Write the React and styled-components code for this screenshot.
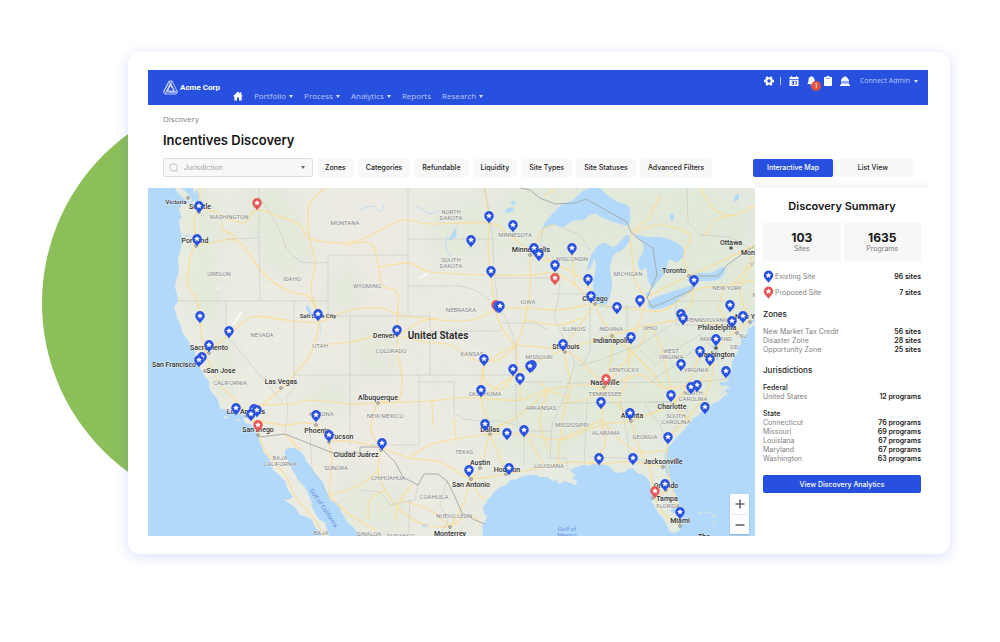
import React from "react";
import styled, { createGlobalStyle } from "styled-components";

const GlobalStyle = createGlobalStyle`
  *, *::before, *::after { box-sizing: border-box; }
  body {
    margin: 0;
    background: #fff;
    color: #222;
    font-family: Inter, "Open Sans", sans-serif;
    font-size: 7px;
  }
  h1, h2, h3, h4, p, dl, dd, ul { margin: 0; padding: 0; }
  button, select { font-family: inherit; }
`;

const blue = "#2850de";
const red = "#e25756";

/* ---------- frame ---------- */

const Page = styled.div`
  position: relative;
  min-height: 100vh;
  padding: 52px 50px 88px 128px;
  overflow: hidden;
`;

const Disc = styled.div`
  position: absolute;
  left: 42px;
  top: 94px;
  width: 418px;
  height: 418px;
  border-radius: 50%;
  background: #8cbf59;
`;

const Card = styled.main`
  position: relative;
  padding: 18px 22px 18px 20px;
  border-radius: 12px;
  background: #fff;
  box-shadow: 0 3px 14px rgba(70, 100, 225, 0.2);
`;

/* ---------- header ---------- */

const Header = styled.header`
  display: flex;
  height: 35px;
  padding: 0 10px 0 15px;
  background: ${blue};
  color: #fff;
`;

const Brand = styled.a`
  display: flex;
  align-items: center;
  gap: 2px;
  margin-right: 13px;
  color: #fff;
  font: 700 8px/12px Roboto, sans-serif;
  text-decoration: none;
`;

const Nav = styled.nav`
  display: flex;
  align-items: flex-end;
  gap: 11px;
  flex: 1;
  padding-bottom: 4px;
`;

const NavLink = styled.a`
  display: flex;
  align-items: center;
  gap: 3px;
  height: 10px;
  color: #b9c6f7;
  font: 400 8px/10px "Open Sans", sans-serif;
  text-decoration: none;
`;

const Caret = styled.span`
  width: 0;
  height: 0;
  border: solid transparent;
  border-width: 3px 2px 0;
  border-top-color: ${(p) => p.$color || "#dce3fc"};
`;

const Tools = styled.div`
  display: flex;
  align-items: center;
  align-self: flex-start;
  gap: 8px;
  height: 22px;
`;

const Divider = styled.span`
  width: 1px;
  height: 8px;
  margin-left: -2px;
  background: #b9c6f7;
`;

const IconButton = styled.button`
  position: relative;
  display: flex;
  padding: 0;
  border: 0;
  background: none;
  color: #fff;
`;

const Badge = styled.span`
  position: absolute;
  left: 4px;
  top: 5px;
  width: 10px;
  height: 10px;
  border-radius: 50%;
  background: #e2533f;
  color: #fff;
  font-size: 6px;
  line-height: 10px;
  text-align: center;
`;

const Account = styled.button`
  display: flex;
  align-items: center;
  gap: 4px;
  margin-left: 2px;
  padding: 0;
  border: 0;
  background: none;
  color: #b9c6f7;
  font: 400 7px/10px "Open Sans", sans-serif;
`;

/* ---------- title and filters ---------- */

const Intro = styled.section`
  padding: 9px 15px 0;
`;

const Crumb = styled.a`
  display: block;
  width: max-content;
  color: #808080;
  font: 400 8px/10px "Open Sans", sans-serif;
  text-decoration: none;
`;

const Title = styled.h1`
  margin-top: 7px;
  color: #161616;
  font-size: 13px;
  font-weight: 600;
  line-height: 18px;
`;

const Toolbar = styled.div`
  display: flex;
  align-items: center;
  gap: 4px;
  height: 19px;
  margin-top: 9px;
`;

const Search = styled.label`
  display: flex;
  align-items: center;
  gap: 5px;
  width: 150px;
  height: 19px;
  padding: 0 7px 0 5px;
  border: 1px solid #dedede;
  border-radius: 2px;
  background: #f8f8f8;
`;

const SearchSelect = styled.select`
  flex: 1;
  min-width: 0;
  padding: 0;
  border: 0;
  background: none;
  color: #a2a2a2;
  font-size: 7px;
  appearance: none;
`;

const Filter = styled.button`
  height: 18px;
  padding: 0 8px;
  border: 0;
  border-radius: 2px;
  background: #f8f8f8;
  color: #222;
  font-size: 7px;
  font-weight: 500;
  white-space: nowrap;
`;

const Tabs = styled.div`
  display: flex;
  margin-left: auto;
`;

const Tab = styled.button`
  width: 80px;
  height: 18px;
  padding: 0;
  border: 0;
  border-radius: 2px;
  background: ${(p) => (p.$active ? blue : "#f8f8f8")};
  color: ${(p) => (p.$active ? "#fff" : "#222")};
  font-size: 7px;
  font-weight: 500;
`;

/* ---------- map ---------- */

const Content = styled.div`
  display: grid;
  grid-template-columns: minmax(0, 1fr) 173px;
  margin-top: 11px;
`;

const MapPane = styled.section`
  position: relative;
  min-height: 348px;
  overflow: hidden;
  background: #b2d9fa;
`;

const MapDrawing = styled.svg`
  display: block;
  width: 100%;
  height: 100%;
  font-family: Roboto, sans-serif;
  text-anchor: middle;
`;

const LandLabels = styled.g`
  paint-order: stroke;
  stroke: rgba(255, 255, 255, 0.6);
  stroke-width: 1px;
  stroke-linejoin: round;
`;

const ZoomControl = styled.div`
  position: absolute;
  right: 6px;
  bottom: 2px;
  display: flex;
  flex-direction: column;
  width: 19px;
  padding: 0 2px;
  border-radius: 1px;
  background: #fff;
  box-shadow: 0 1px 2px rgba(0, 0, 0, 0.2);
`;

const ZoomButton = styled.button`
  display: flex;
  align-items: center;
  justify-content: center;
  height: 20px;
  padding: 0;
  border: 0;
  background: none;
  color: #666;

  & + & { border-top: 1px solid #e8e8e8; }
`;

/* ---------- summary ---------- */

const Summary = styled.aside`
  position: relative;
  padding: 9px 7px 0 8px;
  background: #fff;

  &::before {
    content: "";
    position: absolute;
    inset: -9px 0 auto 0;
    height: 9px;
    background: linear-gradient(rgba(0, 0, 0, 0), rgba(0, 0, 0, 0.04));
  }
`;

const SummaryTitle = styled.h2`
  color: #161616;
  font-size: 11px;
  font-weight: 600;
  line-height: 18px;
  text-align: center;
`;

const Stats = styled.div`
  display: grid;
  grid-template-columns: 1fr 1fr;
  gap: 3px;
  margin-top: 8px;
`;

const Stat = styled.div`
  display: flex;
  flex-direction: column;
  align-items: center;
  height: 38px;
  padding-top: 8px;
  background: #f7f7f7;
  color: #777;
  font-size: 7px;
  line-height: 9px;
`;

const StatValue = styled.strong`
  color: #161616;
  font-size: 12px;
  font-weight: 700;
  line-height: 13px;
`;

const Legend = styled.dl`
  margin-top: 7px;
`;

const Rows = styled.dl`
  margin-top: ${(p) => (p.$spaced ? "8px" : "0")};
`;

const Row = styled.div`
  display: flex;
  align-items: center;
  justify-content: space-between;
  height: ${(p) => (p.$tall ? 16 : 9)}px;
  color: #808080;
  line-height: 9px;

  dt { display: flex; align-items: center; gap: 1px; }
  dd { color: #222; font-weight: 600; }
`;

const Heading = styled.h3`
  margin-top: ${(p) => p.$gap}px;
  color: #222;
  font-size: 8px;
  font-weight: 500;
  line-height: 10px;
`;

const SubHeading = styled.h4`
  margin-top: 8px;
  color: #222;
  font-size: 7px;
  font-weight: 500;
  line-height: 9px;
`;

const Primary = styled.button`
  width: 100%;
  height: 18px;
  margin-top: 12px;
  padding: 0;
  border: 0;
  border-radius: 2px;
  background: ${blue};
  color: #fff;
  font-size: 7px;
  font-weight: 500;
`;

/* ---------- map geometry ---------- */

const parse = (s) => s.trim().split(/\s+/).map((p) => p.split(",").map(Number));

/* Runs a smooth curve through every point of the list. */
function curve(s, closed) {
  const p = parse(s);
  const n = p.length;
  const at = (i) => (closed ? p[(i + n) % n] : p[Math.max(0, Math.min(n - 1, i))]);
  let d = `M${p[0][0]} ${p[0][1]}`;
  for (let i = 0; i < (closed ? n : n - 1); i++) {
    const [a, b, c, e] = [at(i - 1), at(i), at(i + 1), at(i + 2)];
    d += `C${b[0] + (c[0] - a[0]) / 6} ${b[1] + (c[1] - a[1]) / 6} ${c[0] - (e[0] - b[0]) / 6} ${c[1] - (e[1] - b[1]) / 6} ${c[0]} ${c[1]}`;
  }
  return closed ? d + "Z" : d;
}

const LAND =
  "M193 188 L196 199 191 203 182 204 179 209 182 218 179 220 181 235 183 239 180 252 178 258 179 272 176 280 175 288 177 293 178 301 174 308 176 313 177 318 181 326 182 332 188 340 190 345 195 349 195 355 199 359 196 363 200 368 203 373 205 377 209 381 210 390 215 396 218 400 220 408 226 410 232 412 237 411 243 415 245 423 250 424 253 427 256 431 258 437 262 447 264 453 268 457 271 463 273 470 278 474 282 478 286 482 287 488 293 497 288 500 283 499 289 503 295 507 300 515 307 517 312 520 315 527 318 530 322 536 L329 536 327 530 325 523 320 520 317 517 312 507 311 500 308 494 305 487 298 480 295 474 292 470 289 463 285 456 285 450 289 448 295 448 301 452 305 457 306 461 308 463 313 470 315 473 323 482 325 487 328 495 330 500 338 503 340 509 342 513 348 523 353 527 360 536 L483 536 482 527 487 517 484 513 483 507 486 503 487 500 491 497 493 493 500 487 506 485 510 480 518 479 520 477 530 475 536 475 540 477 547 477 553 481 557 480 559 484 565 481 570 483 576 485 577 481 572 478 576 475 573 473 570 470 577 467 583 465 590 466 594 463 600 464 606 465 610 467 614 472 617 473 625 472 628 469 633 468 637 473 643 475 648 479 650 483 651 490 653 494 652 497 652 502 655 507 658 513 662 517 665 522 667 525 669 531 673 533 679 531 681 525 682 520 680 510 679 503 677 497 672 489 670 480 666 473 665 467 664 460 665 453 668 447 672 443 677 437 682 432 690 423 693 418 697 417 702 411 710 410 712 404 719 401 723 397 728 394 725 390 730 388 723 383 729 380 727 375 732 370 732 362 735 356 738 352 737 347 741 344 741 338 747 334 748 327 750 322 755 318 V188 Z";

const ISLANDS = [
  "175,188 184,190 192,200 187,201 180,195",
  "223,416 228,417 226,419",
  "237,419 241,421 238,421",
  "748,327 755,321 755,324 750,328",
];

const LAKES = [
  "543,229 547,220 556,210 563,204 573,200 583,191 597,187 606,194 617,202 627,205 630,213 628,225 617,223 603,218 596,214 590,215 583,220 573,221 563,227 554,225",
  "597,247 605,243 613,247 620,242 627,235 630,240 622,250 614,255 610,268 612,285 608,302 602,307 595,302 593,285 596,265 593,255",
  "587,270 590,258 593,252 594,259 590,268",
  "635,235 647,237 660,237 673,241 682,247 684,255 677,262 669,260 665,273 657,282 653,288 648,280 646,268 641,270 638,262 643,252 642,242",
  "648,303 650,309 663,308 680,300 693,290 692,286 677,290 665,294 656,297",
  "688,281 693,273 710,273 723,267 725,272 717,280 700,281",
  "646,293 649,292 650,295 647,296",
  "306,307 308,306 311,311 313,317 309,314",
  "196,190 199,195 199,206 198,214 195,202",
  "672,508 676,509 675,513 671,512",
  "715,342 718,350 718,360 715,357 713,348",
  "720,382 728,384 722,386",
  "453,232 456,228 456,236 449,240",
  "505,211 511,207 514,210 508,213",
  "511,202 515,201 514,206",
  "670,215 673,214 674,219 671,220",
  "735,196 739,194 738,200 734,201",
  "423,524 428,524 427,527 423,527",
];

const FORESTS = [
  [205, 225, 18, 36], [205, 290, 14, 40], [270, 215, 30, 30], [285, 250, 28, 26],
  [345, 290, 20, 24], [375, 350, 22, 32], [225, 365, 10, 34], [330, 395, 26, 16],
  [560, 220, 60, 50], [660, 225, 90, 40], [650, 380, 80, 50], [720, 290, 60, 40],
  [360, 500, 22, 30], [540, 420, 60, 40], [390, 510, 18, 26], [470, 230, 40, 30],
];

const STATE_LINES = [
  "259,188 259,238 260,301", "227,239 259,238", "177,301 328,301", "226,301 226,335 283,403",
  "259,196 268,210 274,220 282,235 286,248 300,262 315,263 328,262", "328,255 328,316 350,316 350,445",
  "328,255 408,255", "294,301 294,388 286,398 288,410 285,434", "350,316 430,316", "408,188 408,316",
  "408,239 492,239", "408,286 460,286 475,290 490,300", "430,316 430,375", "430,331 500,331",
  "294,375 516,375", "419,375 419,445 370,445", "419,382 454,382 454,413",
  "454,413 464,419 480,421 500,421 516,425 524,431", "495,278 552,278", "502,323 535,323 548,330",
  "516,345 516,420 524,431 524,465", "516,382 562,382", "524,431 552,431", "550,458 566,458 568,470",
  "566,383 700,382 735,378", "562,403 668,402", "587,403 584,466", "621,403 627,435 629,458", "590,457 625,458 652,462",
  "590,307 590,350 583,365", "627,306 627,340", "605,307 640,307", "676,300 676,325", "676,301 733,301", "676,325 735,325",
  "553,294 588,294", "484,188 489,210 493,240 494,278 499,305 508,322 516,345",
  "543,229 540,245 553,258 560,280 558,300 554,318 565,340 575,362 570,380 562,402 552,425 550,458",
  "578,366 600,360 620,352 640,345 655,335 672,325", "640,350 655,365 675,350 700,335 716,350",
  "650,382 675,365 700,345", "650,402 668,402 690,412", "645,405 660,425 668,445",
  "563,228 580,235 590,250", "687,188 688,222 700,235 730,237 748,247",
  "310,434 312,470 330,500", "360,490 380,492 390,505 415,500 418,485", "410,500 408,536",
  "447,481 440,505 448,520 440,536",
];

const BORDER_LINES = [
  "259,437 285,434 333,453 360,453 360,447 380,447",
  "380,447 395,462 403,477 418,485 424,474 438,474 447,481 455,497 462,513 475,520 485,524",
  "520,188 530,190 540,198 555,204 575,203 586,199 627,222 631,232 640,240 653,248 657,275 647,298 652,307 663,303 692,290 694,276 718,276 727,265 748,250 755,246",
];

const ROADS = [
  "200,188 199,206 194,220 195,240 190,260 188,285 197,300 200,320 203,345 212,370 225,390 240,405 252,418 258,436",
  "199,208 215,212 232,220 245,222 257,210 280,217 300,225 309,238 340,243 365,238 402,220 430,224 489,223 510,236 530,250 545,256 555,265",
  "195,246 215,242 235,240 250,255 265,275 290,292 308,296 318,315",
  "221,222 223,230 234,235 235,240",
  "325,188 309,205 309,235 315,262 311,290 319,320 312,350 300,368 283,387 262,405 252,412",
  "203,355 229,335 252,317 285,320 318,322 350,310 380,308 400,315 430,319 462,321 478,318 499,309 530,308 560,310 595,303",
  "345,245 370,243 378,262 382,285 397,292 398,315 397,335 400,365 402,385 397,402 378,403 371,430 381,448",
  "380,267 410,263 430,272 491,275 530,275 555,273 575,285 590,300",
  "485,188 489,223 488,250 491,275 494,300 500,325 515,346",
  "530,255 530,290 525,320 515,346 498,360 484,365 481,398 489,430 480,468 471,480 463,505 450,527",
  "530,255 538,238 545,228 555,225",
  "320,345 350,342 378,336 397,336 425,342 450,345 483,362 515,346 563,348 612,335 650,325 690,320 737,328",
  "397,336 420,322 437,318",
  "260,405 290,404 310,400 350,404 378,403 430,401 455,398 481,398 520,400 548,390 585,385 604,387 640,375 665,388 710,380",
  "252,420 285,425 300,423 316,425 329,440 350,441 381,448 410,458 440,462 471,478 506,474 540,468 570,462 600,464 630,462 663,467",
  "410,457 430,445 450,440 490,434 524,434 560,440 587,430 610,423 631,421 665,408",
  "490,434 500,458 506,474", "490,430 520,415 548,390", "524,431 535,450 545,466",
  "481,398 515,375 540,360 563,350", "563,350 570,385 562,420 558,465",
  "595,304 580,325 563,350", "595,304 602,320 612,335 610,365 604,387 602,420 605,445 590,463",
  "631,421 640,450 650,470 655,498 665,515 680,525",
  "680,526 675,500 668,470 668,440 690,415 705,395 712,375 716,350 737,330 750,320",
  "631,421 665,408 690,390 705,375 716,350",
  "631,421 620,403 628,375 630,345 640,320 645,300 635,280 632,255 630,235",
  "595,304 620,308 645,310 665,310 694,290 730,285 755,280",
  "648,297 670,285 689,276 720,262 755,245", "689,276 684,255 690,235 660,225 635,232",
  "530,255 550,262 572,272 588,285 595,304", "572,250 575,285", "612,335 640,360 665,388",
  "650,325 660,345 668,375 676,405 690,420", "604,387 585,400 562,403", "631,421 604,387",
  "737,330 720,310 725,285", "676,320 690,305 694,290", "700,350 692,375 676,402",
  "650,325 640,345 625,362 604,387", "755,260 740,290 750,320", "733,285 750,262 752,248",
  "604,387 580,360 563,350", "540,382 548,390 570,398", "548,390 540,420 548,450",
  "602,420 575,432 560,440", "602,420 620,440 640,452 668,450", "525,320 560,325 580,318",
  "432,402 433,425", "484,365 485,380 500,390 515,375", "454,418 456,440", "515,346 520,378 520,400",
  "260,437 268,455 285,475 296,497 315,520 324,536", "285,434 300,450", "329,441 332,465 330,495 350,515",
  "381,448 378,470 385,490 400,510 425,525 450,527", "450,527 430,510 400,500", "385,490 370,500 368,520",
  "350,515 375,530", "412,485 400,500 395,520", "450,527 470,515 480,524", "330,495 360,485 378,470",
  "471,480 478,493 485,500", "655,498 668,490 672,485",
  "555,188 545,196", "660,195 650,215 632,232", "700,188 715,210 735,215 755,205", "705,235 715,220 735,215",
];

const STATES = [
  ["WASHINGTON", 229, 219], ["MONTANA", 345, 225], ["NORTH", 451, 214], ["DAKOTA", 451, 220],
  ["SOUTH", 451, 262], ["DAKOTA", 451, 268], ["MINNESOTA", 515, 237], ["WISCONSIN", 572, 261],
  ["MICHIGAN", 628, 276], ["OREGON", 219, 276], ["IDAHO", 292, 281], ["WYOMING", 367, 288],
  ["NEBRASKA", 461, 312], ["IOWA", 528, 304], ["ILLINOIS", 574, 331], ["INDIANA", 611, 331],
  ["OHIO", 650, 330], ["PENNSYLVANIA", 708, 322], ["NEVADA", 262, 337], ["UTAH", 320, 348],
  ["COLORADO", 391, 353], ["KANSAS", 472, 356], ["MISSOURI", 539, 359], ["WEST", 671, 353],
  ["VIRGINIA", 671, 359], ["KENTUCKY", 624, 372], ["VIRGINIA", 696, 372], ["MARYLAND", 716, 341],
  ["DE", 734, 349], ["NJ", 743, 338], ["NEW YORK", 727, 290], ["CALIFORNIA", 230, 385],
  ["ARIZONA", 321, 416], ["NEW MEXICO", 385, 418], ["OKLAHOMA", 485, 396], ["ARKANSAS", 541, 410],
  ["TENNESSEE", 605, 396], ["NORTH", 693, 395], ["CAROLINA", 693, 401], ["SOUTH", 676, 418],
  ["CAROLINA", 676, 424], ["MISSISSIPPI", 572, 427], ["ALABAMA", 606, 435], ["GEORGIA", 645, 439],
  ["TEXAS", 464, 454], ["LOUISIANA", 549, 468], ["BAJA", 280, 460], ["CALIFORNIA", 280, 466],
  ["SONORA", 336, 470], ["CHIHUAHUA", 388, 480], ["COAHUILA", 434, 499], ["NUEVO LEON", 454, 518],
  ["SINALOA", 369, 536], ["DURANGO", 401, 538], ["BAJA", 321, 535], ["FLORIDA", 668, 508],
  ["V", 752, 266], ["M", 755, 297],
];

const CITIES = [
  ["Victoria", 176, 204, 6], ["Seattle", 200, 209], ["Portland", 195, 243], ["Sacramento", 209, 350],
  ["San Francisco", 174, 367], ["San Jose", 221, 373], ["Las Vegas", 281, 384], ["Los Angeles", 246, 414],
  ["San Diego", 258, 432], ["Phoenix", 317, 433], ["Tucson", 342, 439], ["Ciudad Juárez", 356, 457],
  ["Albuquerque", 378, 400], ["Denver", 384, 338], ["United States", 438, 339, 10], ["Salt Lake City", 318, 318, 6],
  ["Minneapolis", 531, 252], ["Chicago", 595, 301], ["St. Louis", 566, 349], ["Indianapolis", 612, 343],
  ["Toronto", 674, 273], ["Ottawa", 731, 245], ["Montreal", 755, 255], ["New York", 750, 319],
  ["Philadelphia", 717, 330], ["Washington", 716, 357], ["Nashville", 605, 385], ["Atlanta", 632, 418],
  ["Charlotte", 672, 409], ["Dallas", 490, 432], ["Austin", 480, 465], ["Houston", 507, 472],
  ["San Antonio", 471, 487], ["Monterrey", 450, 536], ["Jacksonville", 663, 464], ["Orlando", 666, 488],
  ["Tampa", 667, 501], ["Miami", 680, 523], ["The", 704, 539],
];

const DOTS = parse(
  "188,198 199,212 196,246 209,353 205,371 281,388 258,435 316,425 329,442 381,450 378,403 530,255 595,304 565,352 612,336 689,276 750,322 737,333 604,387 631,421 490,434 480,468 506,474 471,479 450,527 663,467 666,490 653,498 680,526 246,416"
);

const CAPITALS = parse("731,248 716,348");

const PROPOSED = parse("257,203 555,278 496,305 606,379 258,425 655,491");

const EXISTING = parse(
  "199,206 197,239 489,216 471,240 513,225 534,248 539,254 572,248 555,265 491,271 588,279 591,296 617,307 640,300 694,280 730,305 743,316 732,321 681,314 683,318 716,339 700,351 710,359 681,364 726,371 631,337 563,344 498,306 500,306 397,330 318,314 200,316 229,331 209,345 202,357 199,360 236,408 254,409 257,410 251,414 316,415 329,435 382,443 484,359 513,369 532,365 530,366 520,378 481,390 485,424 507,433 524,430 601,402 671,395 697,385 691,387 705,407 630,413 668,437 599,458 633,458 469,470 509,468 665,484 680,512"
);

/* A pin whose head is centred on 0,0. */
const PinShape = ({ color }) => (
  <>
    <path d="M0 7.4C-1.5 5-4.800 3-4.800-.2A4.800 4.800 0 0 1 4.800-.2C4.800 3 1.500 5 0 7.400Z" fill={color} stroke="#fff" strokeOpacity=".25" strokeWidth=".4" />
    <path d="M0-3.100.9-1.200 2.900-1 1.400.4 1.900 2.400 0 1.300-1.900 2.400-1.400.4-2.900-1-.9-1.200Z" fill="#fff" />
  </>
);

const LegendPin = ({ color }) => (
  <svg width="11" height="13" viewBox="-5.5 -5.5 11 13" aria-hidden="true">
    <PinShape color={color} />
  </svg>
);

function UsMap() {
  return (
    <MapDrawing viewBox="148 188 607 348" preserveAspectRatio="xMidYMid slice" role="img" aria-label="Sites in the United States">
      <defs>
        <linearGradient id="land" x1="0" x2="1" y1="0" y2="0">
          <stop offset="0" stopColor="#eaece1" />
          <stop offset="0.35" stopColor="#edebe3" />
          <stop offset="0.65" stopColor="#e7ebe0" />
          <stop offset="1" stopColor="#e4eade" />
        </linearGradient>
        <filter id="soft" x="-50%" y="-50%" width="200%" height="200%">
          <feGaussianBlur stdDeviation="7" />
        </filter>
        <filter id="relief" x="0" y="0" width="100%" height="100%">
          <feTurbulence type="fractalNoise" baseFrequency="0.07" numOctaves="4" seed="4" />
          <feColorMatrix values="0 0 0 0 0.72  0 0 0 0 0.79  0 0 0 0 0.70  1.8 0 0 0 -0.85" />
        </filter>
        <clipPath id="coast"><path d={LAND} /></clipPath>
      </defs>

      <path d={LAND} fill="url(#land)" />
      <g clipPath="url(#coast)">
        <g filter="url(#soft)" fill="#dde8d6" opacity=".5">
          {FORESTS.map(([x, y, rx, ry], i) => <ellipse key={i} cx={x} cy={y} rx={rx} ry={ry} />)}
        </g>
        <rect x="148" y="188" width="607" height="348" filter="url(#relief)" opacity=".22" />
      </g>
      <g fill="#e6eadf">{ISLANDS.map((s) => <path key={s} d={curve(s, true)} />)}</g>
      <g fill="#b2d9fa">{LAKES.map((s) => <path key={s} d={curve(s, true)} />)}</g>
      <g fill="#fafaf8">
        <path d="M232 325 241 311 243 312 239 318 234 325ZM419 278 427 272 428 274 421 279ZM215 291 219 286 220 288Z" />
      </g>
      <g fill="none" stroke="#b2d9fa" strokeWidth=".8">
        <path d={curve("360,210 372,206 380,212 384,204")} />
        <path d={curve("415,206 423,210 430,214 438,210")} />
        <path d={curve("447,236 446,248 450,254 449,262")} />
        <path d={curve("319,316 320,326 321,334")} />
        <path d={curve("181,234 190,236 195,240")} />
        <path d="M720 395 728 388" />
      </g>

      <g fill="none" stroke="#fade9c" strokeWidth="1.2" strokeLinejoin="round" strokeLinecap="round">
        {ROADS.map((s) => <path key={s} d={curve(s)} />)}
      </g>
      <g fill="none" stroke="#bcbdb9" strokeWidth=".7" strokeDasharray="1.6 1">
        {STATE_LINES.map((s) => <polyline key={s} points={s} />)}
      </g>
      <g fill="none" stroke="#a4a6a4" strokeWidth=".9" strokeLinejoin="round">
        {BORDER_LINES.map((s) => <polyline key={s} points={s} />)}
      </g>
      <path d={curve("697,514 707,512 715,517 713,524")} fill="none" stroke="#dfe6d8" strokeWidth="1.2" strokeDasharray="5 3" />

      <g fontSize="6" fill="#5f8fd6">
        <text transform="translate(322 509) rotate(56)">Gulf of California</text>
        <text x="567" y="531">Gulf of</text>
        <text x="567" y="537">Mexico</text>
      </g>
      <LandLabels fontSize="6" fill="#7f8181">
        {STATES.map(([name, x, y]) => <text key={name + x + y} x={x} y={y}>{name}</text>)}
      </LandLabels>
      <g fill="#fff" stroke="#555" strokeWidth=".7">
        {DOTS.map(([x, y]) => <circle key={x + "-" + y} cx={x} cy={y} r="1.3" />)}
      </g>
      <g fill="#555">
        {CAPITALS.map(([x, y]) => <circle key={x + "-" + y} cx={x} cy={y} r="1.8" />)}
      </g>
      <LandLabels fill="#2d2d2d">
        {CITIES.map(([name, x, y, size = 7]) => (
          <text key={name} x={x} y={y} fontSize={size} fontWeight={size === 10 ? 700 : 500}>{name}</text>
        ))}
      </LandLabels>

      {PROPOSED.map(([x, y]) => (
        <g key={x + "-" + y} transform={`translate(${x} ${y})`}><PinShape color={red} /></g>
      ))}
      {EXISTING.map(([x, y]) => (
        <g key={x + "-" + y} transform={`translate(${x} ${y})`}><PinShape color={blue} /></g>
      ))}
    </MapDrawing>
  );
}

/* ---------- icons ---------- */

const Logo = () => (
  <svg width="15" height="15" viewBox="0 0 30 30" fill="none" stroke="#dfe5fc" strokeWidth="1.6" strokeLinejoin="round" aria-hidden="true">
    <path d="M12 2h6l11 22-3 4H4l-3-4Z" />
    <path d="M12 2 22 22H9l6-12 3 6M18 2 7 24h19M4 28l11-22 8 16M1 24 11 6M29 24H13" />
  </svg>
);

const HomeIcon = () => (
  <svg width="10" height="10" viewBox="0 0 18 18" fill="#fff" aria-hidden="true">
    <path d="M9 1 0 9.4h2.4V17h4.8v-5.5h3.6V17h4.8V9.4H18L15 6.600V2.400h-2.300v2Z" />
  </svg>
);

const GearIcon = () => (
  <svg width="10" height="10" viewBox="0 0 20 20" fill="none" stroke="#fff" aria-hidden="true">
    <circle cx="10" cy="10" r="5.500" strokeWidth="4" />
    <path d="M3.500 10H0M16.500 10H20M6.700 4.400 5 1.400M13.300 4.400 15 1.400M6.700 15.600 5 18.600M13.300 15.600l1.700 3" strokeWidth="4.600" />
  </svg>
);

const CalendarIcon = () => (
  <svg width="10" height="10" viewBox="0 0 20 20" fill="#fff" aria-hidden="true">
    <path d="M1 2h3V0h2v2h8V0h2v2h3v4H1Z" />
    <path fillRule="evenodd" d="M1 7.5h18V20H1ZM5 9.5v1.600h3v1.300H6V14h2v1.600H5v1.700h5V9.500ZM11.500 9.500v1.700h1.700v6.100h2V9.500Z" />
  </svg>
);

const BellIcon = () => (
  <svg width="9" height="10" viewBox="0 0 18 20" fill="#fff" aria-hidden="true">
    <path d="M9 0c1 0 1.500.7 1.500 1.600C13.500 2.300 15 4.700 15 8c0 5 1.200 6.500 2.800 8H.2C1.800 14.500 3 13 3 8c0-3.300 1.500-5.700 4.500-6.400C7.500.7 8 0 9 0ZM6.500 17h5a2.500 2.500 0 0 1-5 0Z" />
  </svg>
);

const ClipboardIcon = () => (
  <svg width="8" height="10" viewBox="0 0 16 20" fill="#fff" aria-hidden="true">
    <path fillRule="evenodd" d="M1.500 2H5a3 3 0 0 1 6 0h3.500C15.300 2 16 2.700 16 3.500v15c0 .8-.7 1.500-1.500 1.500h-13C.7 20 0 19.300 0 18.500v-15C0 2.700.7 2 1.500 2ZM4 4.500v1h8v-1Z" />
  </svg>
);

const BankIcon = () => (
  <svg width="10" height="10" viewBox="0 0 20 20" fill="#fff" aria-hidden="true">
    <path d="M9 0h2v2.200C14 2.800 16 4.500 16.500 7H18v2.500H2V7h1.500C4 4.500 6 2.800 9 2.200ZM3 9.500h2v6H3ZM7 9.500h2v6H7ZM11 9.500h2v6h-2ZM15 9.500h2v6h-2ZM2 15.500h16v2h2V20H0v-2.500h2Z" />
  </svg>
);

const SearchIcon = () => (
  <svg width="10" height="10" viewBox="0 0 20 20" fill="none" stroke="#b0b0b0" strokeWidth="1.500" aria-hidden="true">
    <circle cx="9" cy="9" r="7.500" />
    <path d="m14.500 14.500 4 4" />
  </svg>
);

const PlusIcon = () => (
  <svg width="10" height="10" viewBox="0 0 10 10" stroke="#666" strokeWidth="1.600" aria-hidden="true">
    <path d="M.5 5h9M5 .5v9" />
  </svg>
);

const MinusIcon = () => (
  <svg width="10" height="10" viewBox="0 0 10 10" stroke="#666" strokeWidth="1.600" aria-hidden="true">
    <path d="M.5 5h9" />
  </svg>
);

/* ---------- data ---------- */

const NAV = [["Portfolio", true], ["Process", true], ["Analytics", true], ["Reports", false], ["Research", true]];
const FILTERS = ["Zones", "Categories", "Refundable", "Liquidity", "Site Types", "Site Statuses", "Advanced Filters"];
const ZONES = [["New Market Tax Credit", "56 sites"], ["Disaster Zone", "28 sites"], ["Opportunity Zone", "25 sites"]];
const FEDERAL = [["United States", "12 programs"]];
const STATE = [
  ["Connecticut", "76 programs"], ["Missouri", "69 programs"], ["Louisiana", "67 programs"],
  ["Maryland", "67 programs"], ["Washington", "63 programs"],
];

const DataRows = ({ items, spaced }) => (
  <Rows $spaced={spaced}>
    {items.map(([name, value]) => (
      <Row key={name}><dt>{name}</dt><dd>{value}</dd></Row>
    ))}
  </Rows>
);

export default function App() {
  return (
    <Page>
      <GlobalStyle />
      <Disc />
      <Card>
        <Header>
          <Brand href="#"><Logo />Acme Corp</Brand>
          <Nav>
            <NavLink href="#" aria-label="Home"><HomeIcon /></NavLink>
            {NAV.map(([name, menu]) => (
              <NavLink href="#" key={name}>{name}{menu && <Caret />}</NavLink>
            ))}
          </Nav>
          <Tools>
            <IconButton aria-label="Settings"><GearIcon /></IconButton>
            <Divider />
            <IconButton aria-label="Calendar"><CalendarIcon /></IconButton>
            <IconButton aria-label="Notifications"><BellIcon /><Badge>1</Badge></IconButton>
            <IconButton aria-label="Tasks"><ClipboardIcon /></IconButton>
            <IconButton aria-label="Agencies"><BankIcon /></IconButton>
            <Account>Connect Admin<Caret /></Account>
          </Tools>
        </Header>

        <Intro>
          <Crumb href="#">Discovery</Crumb>
          <Title>Incentives Discovery</Title>
          <Toolbar>
            <Search>
              <SearchIcon />
              <SearchSelect aria-label="Jurisdiction" defaultValue="">
                <option value="">Jurisdiction</option>
              </SearchSelect>
              <Caret $color="#666" />
            </Search>
            {FILTERS.map((name) => <Filter key={name}>{name}</Filter>)}
            <Tabs>
              <Tab $active>Interactive Map</Tab>
              <Tab>List View</Tab>
            </Tabs>
          </Toolbar>
        </Intro>

        <Content>
          <MapPane>
            <UsMap />
            <ZoomControl>
              <ZoomButton aria-label="Zoom in"><PlusIcon /></ZoomButton>
              <ZoomButton aria-label="Zoom out"><MinusIcon /></ZoomButton>
            </ZoomControl>
          </MapPane>
          <Summary>
            <SummaryTitle>Discovery Summary</SummaryTitle>
            <Stats>
              <Stat><StatValue>103</StatValue>Sites</Stat>
              <Stat><StatValue>1635</StatValue>Programs</Stat>
            </Stats>
            <Legend>
              <Row $tall><dt><LegendPin color={blue} />Existing Site</dt><dd>96 sites</dd></Row>
              <Row $tall><dt><LegendPin color={red} />Proposed Site</dt><dd>7 sites</dd></Row>
            </Legend>
            <Heading $gap={9}>Zones</Heading>
            <DataRows items={ZONES} spaced />
            <Heading $gap={11}>Jurisdictions</Heading>
            <SubHeading>Federal</SubHeading>
            <DataRows items={FEDERAL} />
            <SubHeading>State</SubHeading>
            <DataRows items={STATE} />
            <Primary>View Discovery Analytics</Primary>
          </Summary>
        </Content>
      </Card>
    </Page>
  );
}
